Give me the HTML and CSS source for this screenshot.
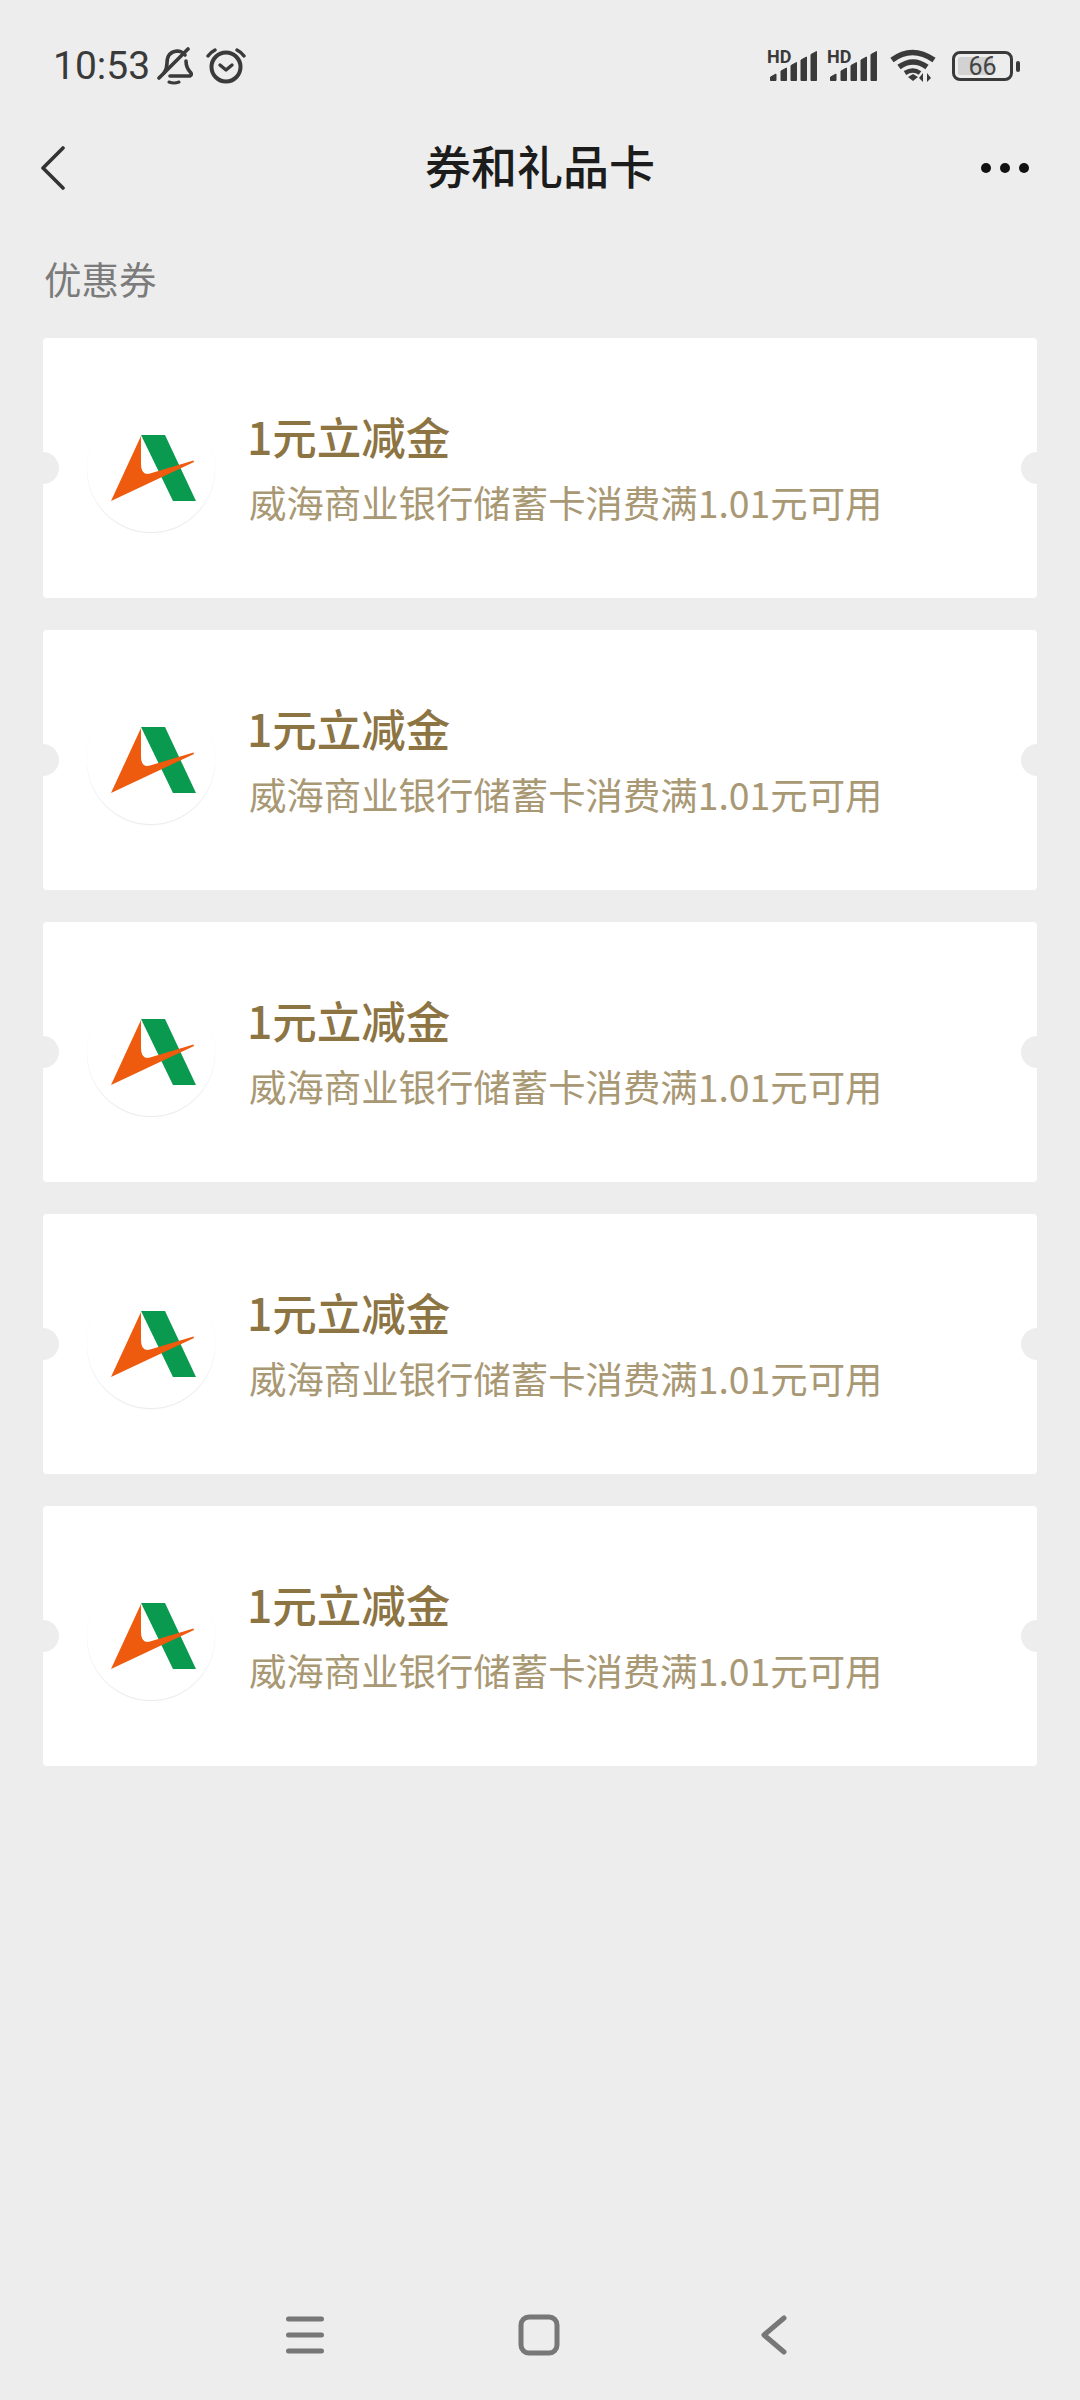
FILE: index.html
```html
<!DOCTYPE html>
<html lang="zh-CN">
<head>
    <meta charset="UTF-8">
    <meta name="viewport" content="width=device-width, initial-scale=1.0">
    <title>券和礼品卡</title>
    <link rel="stylesheet" href="styles.css">
</head>
<body>
    <svg class="defs" width="0" height="0">
        <symbol id="bankLogo" viewBox="0 0 128 128">
            <path fill="#0a9a4f" d="M54 31H78L109 97H86Z"/>
            <path fill="#ee5a0e" d="M54 32L24 97L107 58L106.5 56.5L63 69.5Q54 72 54 60Z"/>
        </symbol>
        <symbol id="bars" viewBox="0 0 50 32">
            <path fill="#3a3a3a" stroke="#3a3a3a" stroke-linejoin="round" d="M3.500 30.500v-3.500l5.500-3v6.500zM14 30.500V21l5.500-3v12.500zM24 30.500V15.500l5.500-3v18zM34 30.500V10l5.500-3v23.500zM44 30.500V4.500l5.500-3v29z"/>
        </symbol>
    </svg>

    <div class="status-bar">
        <div class="status-left">
            <span class="time">10:53</span>
            <svg class="bell" width="36" height="38" viewBox="0 0 36 38" fill="none" stroke="#3a3a3a" stroke-width="3.600" stroke-linecap="round" stroke-linejoin="round">
                <path d="M7 26q3-4 3-10 0-11 10-12 5 0 8 4"/>
                <path d="M29 14q0 7 5 12 1 2-1 3H13"/>
                <path d="M2 31L31 2"/>
                <path d="M12 35q5 2 10 0" stroke-width="3"/>
            </svg>
            <svg class="alarm" width="40" height="36" viewBox="0 0 40 36" fill="none" stroke="#3a3a3a" stroke-width="4" stroke-linecap="round" stroke-linejoin="round">
                <circle cx="20" cy="19" r="14.5"/>
                <path d="M14 17l6 5 6-5" stroke-width="3.400"/>
                <path d="M2 8q3-4 7-6M38 8q-3-4-7-6" stroke-width="3.400"/>
            </svg>
        </div>
        <div class="status-right">
            <div class="signal">
                <span class="hd">HD</span>
                <svg width="50" height="32"><use href="#bars"/></svg>
            </div>
            <div class="signal">
                <span class="hd">HD</span>
                <svg width="50" height="32"><use href="#bars"/></svg>
            </div>
            <svg class="wifi" width="46" height="34" viewBox="0 0 46 34" fill="none" stroke="#3a3a3a" stroke-width="5.500">
                <path d="M2 11q20-15 42 0"/>
                <path d="M9 18q14-10 28 0"/>
                <path d="M15 24q8-5 15 0" stroke-width="4.500"/>
                <path d="M18 28l5-3 5 3-5 4z" fill="#3a3a3a" stroke="none"/>
                <path d="M33 33v-9l-4 5zM37 33v-9l4 5z" fill="#3a3a3a" stroke="none"/>
            </svg>
            <div class="battery">
                <div class="battery-body">
                    <div class="battery-fill"></div>
                    <span class="battery-num">66</span>
                </div>
                <div class="battery-tip"></div>
            </div>
        </div>
    </div>

    <div class="nav-bar">
        <svg class="back" width="24" height="44" viewBox="0 0 24 44" fill="none" stroke="#333" stroke-width="3.600" stroke-linecap="round" stroke-linejoin="round">
            <path d="M22 2L2 22L22 42"/>
        </svg>
        <div class="nav-title">券和礼品卡</div>
        <div class="more">
            <span class="dot"></span>
            <span class="dot"></span>
            <span class="dot"></span>
        </div>
    </div>

    <div class="section-label">优惠券</div>

    <div class="coupon-list">
        <div class="coupon">
            <div class="logo"><svg width="128" height="128"><use href="#bankLogo"/></svg></div>
            <div class="coupon-text">
                <div class="coupon-title">1元立减金</div>
                <div class="coupon-desc">威海商业银行储蓄卡消费满1.01元可用</div>
            </div>
        </div>
        <div class="coupon">
            <div class="logo"><svg width="128" height="128"><use href="#bankLogo"/></svg></div>
            <div class="coupon-text">
                <div class="coupon-title">1元立减金</div>
                <div class="coupon-desc">威海商业银行储蓄卡消费满1.01元可用</div>
            </div>
        </div>
        <div class="coupon">
            <div class="logo"><svg width="128" height="128"><use href="#bankLogo"/></svg></div>
            <div class="coupon-text">
                <div class="coupon-title">1元立减金</div>
                <div class="coupon-desc">威海商业银行储蓄卡消费满1.01元可用</div>
            </div>
        </div>
        <div class="coupon">
            <div class="logo"><svg width="128" height="128"><use href="#bankLogo"/></svg></div>
            <div class="coupon-text">
                <div class="coupon-title">1元立减金</div>
                <div class="coupon-desc">威海商业银行储蓄卡消费满1.01元可用</div>
            </div>
        </div>
        <div class="coupon">
            <div class="logo"><svg width="128" height="128"><use href="#bankLogo"/></svg></div>
            <div class="coupon-text">
                <div class="coupon-title">1元立减金</div>
                <div class="coupon-desc">威海商业银行储蓄卡消费满1.01元可用</div>
            </div>
        </div>
    </div>

    <div class="bottom-nav">
        <svg class="menu-icon" width="38" height="38" viewBox="0 0 38 38" stroke="#777" stroke-width="5" stroke-linecap="round">
            <path d="M2.5 3H35.5M2.5 19H35.5M2.5 35H35.5"/>
        </svg>
        <svg width="42" height="42" viewBox="0 0 42 42" fill="none" stroke="#777" stroke-width="5">
            <rect x="3" y="3" width="36" height="36" rx="8"/>
        </svg>
        <svg width="26" height="40" viewBox="0 0 26 40" fill="none" stroke="#777" stroke-width="5" stroke-linecap="round" stroke-linejoin="round">
            <path d="M23 3L3 20L23 37"/>
        </svg>
    </div>
</body>
</html>
```

FILE: styles.css
```css
* {
    box-sizing: border-box;
}
body {
    margin: 0;
    width: 1080px;
    height: 2400px;
    background-color: #ededed;
    font-family: "Noto Sans CJK SC", "Noto Sans", sans-serif;
    display: flex;
    flex-direction: column;
}
.defs {
    display: block;
    height: 0;
}
.status-bar {
    height: 130px;
    padding: 2px 60px 0 53px;
    display: flex;
    justify-content: space-between;
    align-items: center;
}
.status-left {
    display: flex;
    align-items: center;
}
.time {
    font-family: "Roboto", sans-serif;
    font-size: 39px;
    color: #3a3a3a;
    width: 104px;
}
.alarm {
    margin-left: 13px;
}
.status-right {
    display: flex;
    align-items: center;
}
.signal {
    position: relative;
    width: 50px;
    height: 32px;
    margin-right: 10px;
}
.signal svg {
    display: block;
}
.hd {
    position: absolute;
    left: 0;
    top: -1px;
    font-family: "Roboto", sans-serif;
    font-size: 18px;
    font-weight: 700;
    line-height: 16px;
    color: #3a3a3a;
}
.wifi {
    margin: 0 16px 0 3px;
}
.battery {
    display: flex;
    align-items: center;
    gap: 3px;
}
.battery-body {
    position: relative;
    width: 61px;
    height: 30px;
    border: 3px solid #3a3a3a;
    border-radius: 8px;
    display: flex;
    align-items: center;
    justify-content: center;
}
.battery-fill {
    position: absolute;
    left: 3px;
    top: 3px;
    bottom: 3px;
    width: 35px;
    background-color: #d2d2d2;
    border-radius: 2px;
}
.battery-num {
    position: relative;
    font-family: "Roboto", sans-serif;
    font-size: 25px;
    line-height: 1;
    color: #444;
}
.battery-tip {
    width: 4px;
    height: 11px;
    border-radius: 2px;
    background-color: #3a3a3a;
}
.nav-bar {
    height: 76px;
    padding: 0 51px;
    display: grid;
    grid-template-columns: 1fr auto 1fr;
    align-items: center;
}
.back {
    margin-left: -10px;
}
.nav-title {
    font-size: 46px;
    font-weight: 500;
    color: #1c1c1c;
    line-height: 60px;
    margin-bottom: 8px;
}
.more {
    display: flex;
    justify-content: flex-end;
    gap: 9px;
}
.dot {
    width: 10px;
    height: 10px;
    border-radius: 50%;
    background-color: #111;
}
.section-label {
    margin: 46px 0 34px 44px;
    font-size: 37.5px;
    line-height: 52px;
    color: #7b7b7b;
}
.coupon-list {
    flex: 1;
    padding: 0 43px;
    display: flex;
    flex-direction: column;
    gap: 32px;
}
.coupon {
    position: relative;
    height: 260px;
    padding-left: 44px;
    background-color: #fff;
    border-radius: 4px;
    display: flex;
    align-items: center;
    overflow: hidden;
}
.coupon::before,
.coupon::after {
    content: "";
    position: absolute;
    top: 114px;
    width: 32px;
    height: 32px;
    border-radius: 50%;
    background-color: #ededed;
}
.coupon::before {
    left: -16px;
}
.coupon::after {
    right: -16px;
}
.logo {
    width: 128px;
    height: 128px;
    border-radius: 50%;
    background-color: #fff;
    box-shadow: 0 1px 1px #e9e9e9;
    flex-shrink: 0;
}
.coupon-text {
    margin: 0 0 0 32px;
}
.coupon-title {
    font-size: 44.5px;
    font-weight: 500;
    line-height: 60px;
    color: #8d7443;
}
.coupon-desc {
    margin: 8px 0 0 2px;
    font-size: 37.4px;
    line-height: 56px;
    color: #a99874;
}
.bottom-nav {
    height: 130px;
    padding-right: 2px;
    display: grid;
    grid-template-columns: repeat(3, 235px);
    justify-content: center;
    justify-items: center;
    align-items: center;
}
.menu-icon {
    margin-left: 2px;
}
```
